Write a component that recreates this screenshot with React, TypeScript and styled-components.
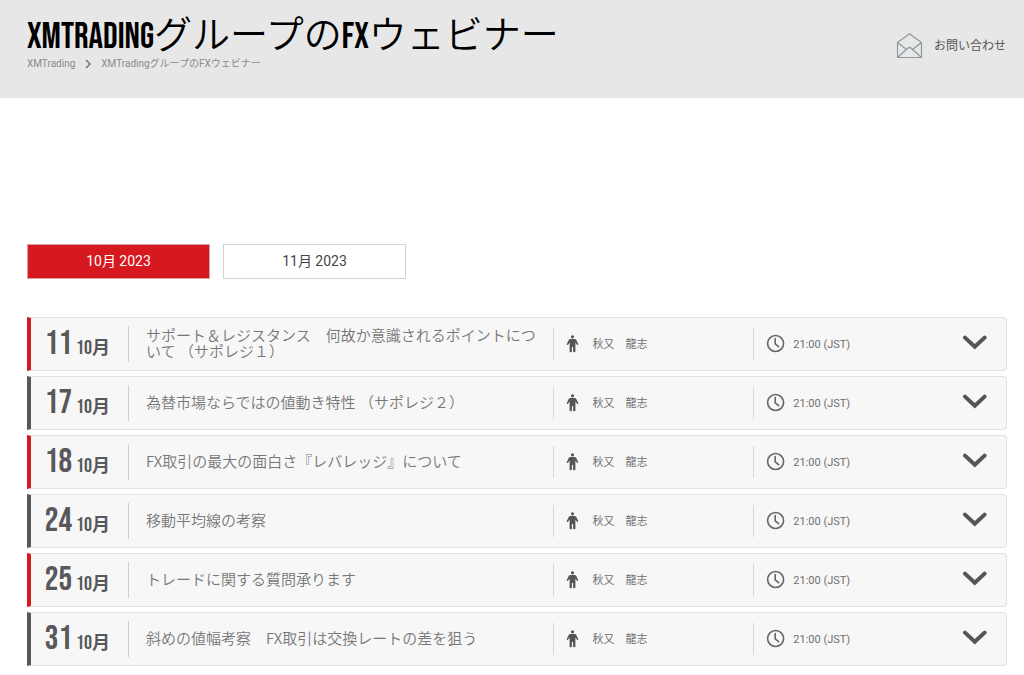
import React, { useState } from "react";
import styled, { createGlobalStyle } from "styled-components";

const sans = `Roboto, "Noto Sans CJK JP", sans-serif`;
const condensed = `"Bebas Neue", Roboto, "Noto Sans CJK JP", sans-serif`;

const GlobalStyle = createGlobalStyle`
  *, *::before, *::after { box-sizing: border-box; }
  body {
    margin: 0;
    background: #fff;
    color: #6f6f6f;
    font-family: ${sans};
  }
`;

const Header = styled.header`
  display: flex;
  justify-content: space-between;
  align-items: flex-start;
  padding: 18px 18px 26px 27px;
  background: #e7e7e7;
`;

const Title = styled.h1`
  margin: 0;
  color: #000;
  font: 350 38px/38px ${condensed};
`;

const TitleLatin = styled.span`
  font-size: 36px;
  line-height: 1;
`;

const Breadcrumb = styled.nav`
  display: flex;
  align-items: center;
  gap: 9px;
  color: #8a8a8a;
  font-size: 10px;
  line-height: 16px;
`;

const CrumbLink = styled.a`
  color: inherit;
  text-decoration: none;
`;

const ContactLink = styled.a`
  display: flex;
  align-items: center;
  gap: 11px;
  margin-top: 12px;
  color: #555;
  font-size: 12px;
  line-height: 32px;
  text-decoration: none;
`;

const Main = styled.main`
  padding: 146px 17px 8px 27px;
`;

const Tabs = styled.div`
  display: flex;
  gap: 13px;
`;

const TabButton = styled.button<{ $active: boolean }>`
  width: 183px;
  height: 35px;
  padding: 0 0 2px;
  border: 1px solid ${(p) => (p.$active ? "#dba0a2" : "#d3d3d3")};
  background: ${(p) => (p.$active ? "#d6181f" : "#fff")};
  color: ${(p) => (p.$active ? "#fff" : "#444")};
  font: 400 14px/20px ${sans};
  cursor: pointer;
`;

const List = styled.ul`
  display: grid;
  gap: 5px;
  margin: 38px 0 0;
  padding: 0;
  list-style: none;
`;

const Row = styled.li<{ $accent: boolean }>`
  display: grid;
  grid-template-columns: 98px minmax(0, 424fr) minmax(0, 201fr) minmax(0, 253fr);
  align-items: center;
  min-height: 54px;
  border: 1px solid #e1e1e1;
  border-left: 4px solid ${(p) => (p.$accent ? "#d6181f" : "#58585a")};
  border-radius: 0 4px 4px 0;
  background: #f7f7f7;
`;

const DateCell = styled.time`
  display: flex;
  justify-content: flex-end;
  align-items: baseline;
  gap: 4px;
  height: 36px;
  padding-right: 18px;
  border-right: 1px solid #cfcfcf;
  color: #58585a;
  font: 400 34px/36px ${condensed};
`;

const Month = styled.span`
  font-size: 20px;
`;

const MonthUnit = styled.span`
  font-size: 18px;
  font-weight: 700;
`;

const Topic = styled.h2`
  margin: 0;
  padding: 0 5px 2px 17px;
  color: #777;
  font: 350 15px/16px "Noto Sans CJK JP", sans-serif;
`;

const Detail = styled.div`
  display: flex;
  align-items: center;
  height: 32px;
  padding-left: 12px;
  border-left: 1px solid #d6d6d6;
  font-size: 11px;
  line-height: 16px;
`;

const Speaker = styled.span`
  margin-left: 13px;
  padding-top: 2px;
`;

const Clock = styled.span`
  margin-left: 8px;
  padding-top: 1px;
`;

const ToggleButton = styled.button`
  display: flex;
  margin-left: auto;
  padding: 4px 19px 6px 8px;
  border: 0;
  background: none;
  color: #555;
  cursor: pointer;
`;

const EnvelopeIcon = () => (
  <svg width="27" height="27" viewBox="0 0 27 27" fill="none" stroke="#8b989e" strokeWidth="1.2" aria-hidden="true">
    <path d="M1.5 9.5 13.5 .8 25.5 9.5V24.5H1.5ZM1.5 9.5 10.5 16.5M25.5 9.5 16.5 16.5M1.5 24.5 11.5 15.5Q13.5 13.5 15.5 15.5L25.5 24.5" />
  </svg>
);

const CrumbArrow = () => (
  <svg width="8" height="10" viewBox="0 0 8 10" fill="none" stroke="#777" strokeWidth="1.6" aria-hidden="true">
    <path d="M2 1 6 5 2 9" />
  </svg>
);

const PersonIcon = () => (
  <svg width="14" height="18" viewBox="0 0 14 18" fill="#555" aria-hidden="true">
    <circle cx="6.5" cy="1.8" r="1.6" />
    <path d="M4.4 4h4.2c.8 0 1.3.3 1.7 1l1.9 3.9c.4 1-.9 1.5-1.4.7L9.4 7.5V16.5c0 .9-2.3.9-2.3 0v-4.6H5.9v4.6c0 .9-2.3.9-2.3 0V7.5L2.2 9.6c-.5.8-1.8.3-1.4-.7L2.7 5c.4-.7.9-1 1.7-1Z" />
  </svg>
);

const ClockIcon = () => (
  <svg width="19" height="20" viewBox="0 0 19 20" fill="none" stroke="#666" strokeWidth="1.6" strokeLinecap="round" aria-hidden="true">
    <circle cx="9.6" cy="9.5" r="8" />
    <path d="M9.2 4.6v5.3l3.4 2.8" />
  </svg>
);

const ChevronIcon = () => (
  <svg width="25" height="16" viewBox="0 0 25 16" fill="none" stroke="currentColor" strokeWidth="4" aria-hidden="true">
    <path d="M3 2.6 12.8 11.8 22.6 2.6" strokeLinecap="round" />
  </svg>
);

const months = ["10月 2023", "11月 2023"];

const webinars = [
  { day: "11", topic: "サポート＆レジスタンス　何故か意識されるポイントについて （サポレジ１）" },
  { day: "17", topic: "為替市場ならではの値動き特性 （サポレジ２）" },
  { day: "18", topic: "FX取引の最大の面白さ『レバレッジ』について" },
  { day: "24", topic: "移動平均線の考察" },
  { day: "25", topic: "トレードに関する質問承ります" },
  { day: "31", topic: "斜めの値幅考察　FX取引は交換レートの差を狙う" },
];

export default function App() {
  const [month, setMonth] = useState(0);

  return (
    <>
      <GlobalStyle />
      <Header>
        <div>
          <Title>
            <TitleLatin>XMTRADING</TitleLatin>グループの<TitleLatin>FX</TitleLatin>ウェビナー
          </Title>
          <Breadcrumb>
            <CrumbLink href="#">XMTrading</CrumbLink>
            <CrumbArrow />
            <span>XMTradingグループのFXウェビナー</span>
          </Breadcrumb>
        </div>
        <ContactLink href="#contact">
          <EnvelopeIcon />
          お問い合わせ
        </ContactLink>
      </Header>
      <Main>
        <Tabs>
          {months.map((label, i) => (
            <TabButton key={label} type="button" $active={i === month} onClick={() => setMonth(i)}>
              {label}
            </TabButton>
          ))}
        </Tabs>
        <List>
          {webinars.map(({ day, topic }, i) => (
            <Row key={day} $accent={i % 2 === 0}>
              <DateCell dateTime={`2023-10-${day}`}>
                {day}
                <Month>
                  10<MonthUnit>月</MonthUnit>
                </Month>
              </DateCell>
              <Topic>{topic}</Topic>
              <Detail>
                <PersonIcon />
                <Speaker>秋又　龍志</Speaker>
              </Detail>
              <Detail>
                <ClockIcon />
                <Clock>21:00 (JST)</Clock>
                <ToggleButton type="button" aria-label={topic}>
                  <ChevronIcon />
                </ToggleButton>
              </Detail>
            </Row>
          ))}
        </List>
      </Main>
    </>
  );
}
